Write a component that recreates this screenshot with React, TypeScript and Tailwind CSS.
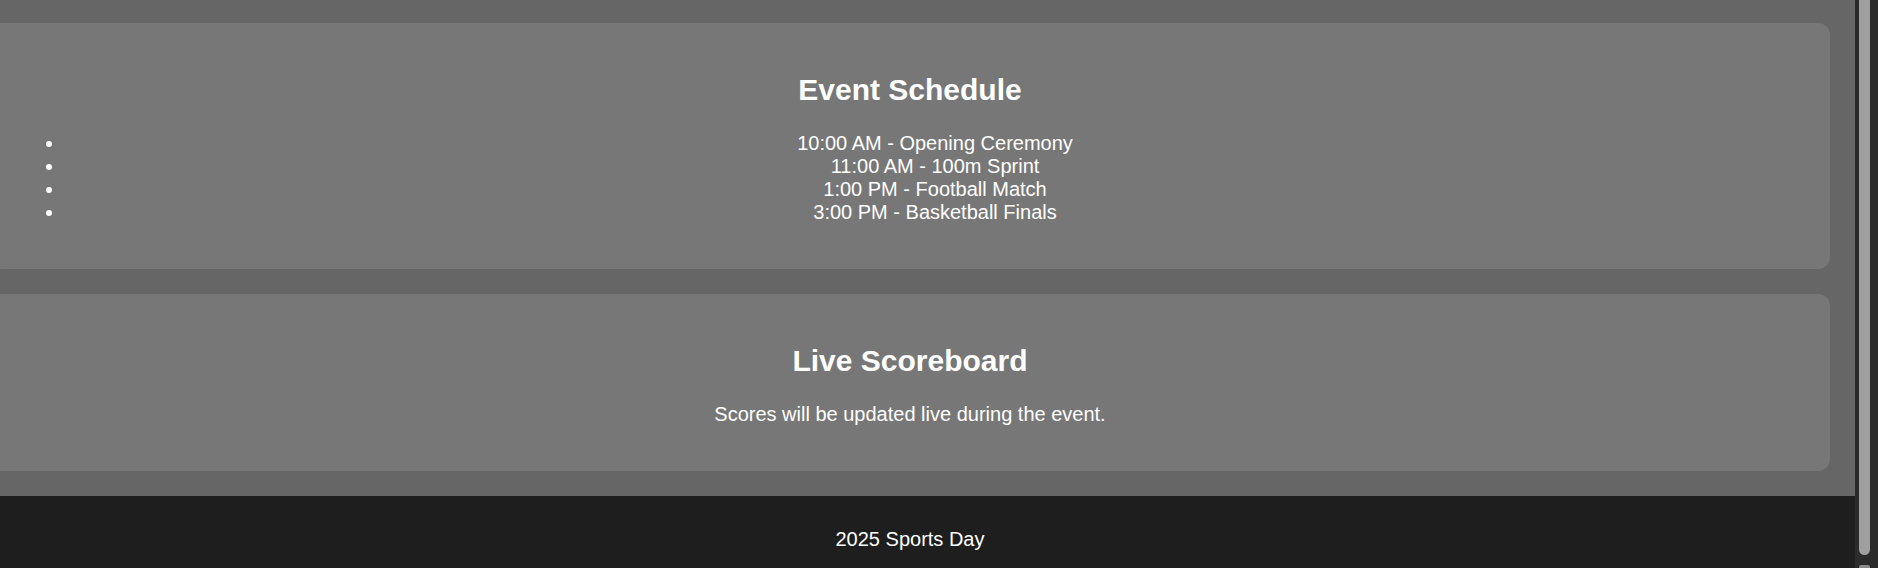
import React from "react";

const schedule = [
  "10:00 AM - Opening Ceremony",
  "11:00 AM - 100m Sprint",
  "1:00 PM - Football Match",
  "3:00 PM - Basketball Finals",
];

function Section({ title, children }: { title: string; children: React.ReactNode }) {
  return (
    <section className="mb-[25px] rounded-[12px] bg-[#777777] p-[25px] text-center text-white">
      <h2 className="mb-[25px] mt-[25px] text-[30px] font-bold leading-[34px]">{title}</h2>
      {children}
    </section>
  );
}

export default function App() {
  return (
    <div
      className="flex h-[568px] w-[1878px] overflow-hidden bg-[#666666]"
      style={{ fontFamily: '"Liberation Sans", Arial, sans-serif' }}
    >
      {/* page, scrolled 35px to the right and down to the bottom */}
      <div className="h-full w-[1855px] overflow-hidden">
        <div className="ml-[-35px] w-[1890px]">
          <main className="px-[25px] pt-[23px]">
            <Section title="Event Schedule">
              <ul className="mb-[20px] list-disc pl-[50px] text-[20px] leading-[23px]">
                {schedule.map((item) => (
                  <li key={item}>{item}</li>
                ))}
              </ul>
            </Section>
            <Section title="Live Scoreboard">
              <p className="mb-[20px] text-[20px] leading-[23px]">
                Scores will be updated live during the event.
              </p>
            </Section>
          </main>
          <footer className="bg-[#1e1e1e] py-[12px] text-center text-white">
            <p className="my-[20px] text-[20px] leading-[23px]">2025 Sports Day</p>
          </footer>
        </div>
      </div>

      {/* scrollbar */}
      <div className="flex h-full w-[23px] flex-col bg-[#2b2b2b] pl-[4px] pr-[8px]">
        <div className="h-[555px] w-[11px] rounded-b-full bg-[#9f9f9f]" />
        <div className="mt-[10px] h-[3px] w-[11px] rounded-t-[2px] bg-[#8a8a8a]" />
      </div>
    </div>
  );
}
